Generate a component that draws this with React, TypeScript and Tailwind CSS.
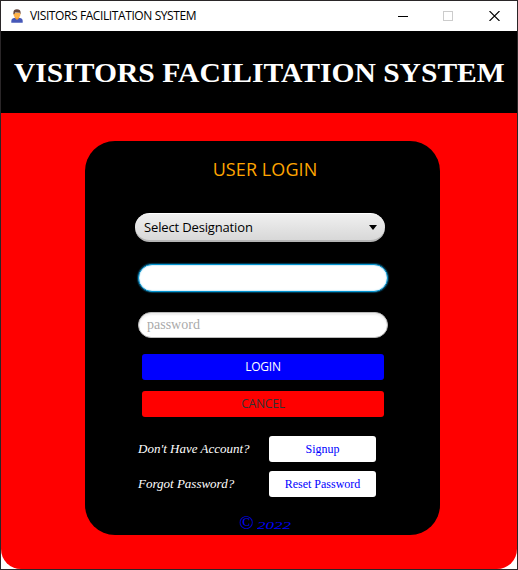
import type { ReactNode } from "react";

const sans = "font-['Open_Sans','Noto_Sans',sans-serif]";
const serif = "font-['Liberation_Serif',serif]";

function UserIcon() {
  return (
    <svg width="12" height="14" viewBox="0 0 12 14" aria-hidden="true">
      <path d="M.3 13.8V12Q.3 9.2 3.8 8.7h4.6q3.3.5 3.3 3.3v1.8Z" fill="#4658b8" />
      <path d="M4 8h4v1.3L6 11 4 9.3Z" fill="#f29a2e" />
      <path d="M2.6 4h6.8v1.8Q8.8 9 6 9T2.6 5.8Z" fill="#ffb34a" />
      <path d="M2.4 5.2V3.3Q2.500.2 5.9.2q3.6 0 3.7 3.1v1.900l-.9-1.500-4.500-.3-.9 1.900Z" fill="#68483f" />
    </svg>
  );
}

function TitleBar() {
  return (
    <div className="flex h-[30px] shrink-0 items-center bg-white pl-[10px]">
      <UserIcon />
      <span className={`${sans} ml-[7px] w-[170px] text-[12px] leading-[16px] tracking-[-0.4px] whitespace-nowrap text-black`}>
        VISITORS FACILITATION SYSTEM
      </span>
      <div className="ml-auto flex h-[10px] items-center gap-[35px] pr-[17px]">
        <span className="h-px w-[10px] bg-black" />
        <span className="h-[10px] w-[10px] border border-[#ccc]" />
        <svg width="11" height="10" viewBox="0 0 11 10" className="mb-px ml-px" aria-hidden="true">
          <path d="M.5 0l10 10M10.500 0l-10 10" stroke="#000" strokeWidth="1.1" />
        </svg>
      </div>
    </div>
  );
}

function SmallButton({ children }: { children: ReactNode }) {
  return (
    <button className={`${serif} h-[26px] w-[107px] rounded-[3px] bg-white text-[12px] leading-[26px] text-[#00f]`}>
      {children}
    </button>
  );
}

export default function App() {
  return (
    <div className="flex h-[570px] w-[518px] flex-col border border-[#2a2628] bg-white">
      <TitleBar />
      <header className="flex h-[82px] shrink-0 items-center justify-center bg-black pt-[2px]">
        <h1 className={`${serif} scale-x-[1.056] text-[28px] leading-[32px] font-bold whitespace-nowrap text-white`}>
          VISITORS FACILITATION SYSTEM
        </h1>
      </header>
      <main className="flex-1 rounded-b-[20px] bg-[#f00] pt-[28px] pl-[84px]">
        <section className="flex h-[394px] w-[355px] flex-col rounded-[30px] bg-black pt-[16px]">
          <h2 className={`${sans} h-[24px] pl-[5px] text-center text-[18px] leading-[25px] tracking-[0.08px] text-[#ffa500]`}>
            USER LOGIN
          </h2>
          <button className="mt-[32px] ml-[50px] flex h-[29px] w-[250px] items-center justify-between rounded-full border-t border-b-2 border-t-white border-b-[#b5b5b5] bg-linear-to-b from-[#f0f0f0] to-[#d8d8d8] pr-[8px] pl-[9px]">
            <span className={`${sans} text-[13px] leading-[18px] tracking-[-0.15px] text-black`}>Select Designation</span>
            <svg width="8" height="5" viewBox="0 0 8 5" aria-hidden="true">
              <path d="M0 0h8L4 5Z" fill="#000" />
            </svg>
          </button>
          <input
            aria-label="username"
            className="mt-[22px] ml-[53px] h-[28px] w-[250px] rounded-full border border-[#0394d0] bg-white shadow-[0_0_1px_1px_#033c55,inset_0_0_1px_1px_#d5effa] outline-none"
          />
          <input
            aria-label="password"
            placeholder="password"
            className={`${serif} mt-[20px] ml-[53px] h-[26px] w-[250px] rounded-full border border-[#bababa] bg-white pl-[8px] text-[14px] shadow-[inset_0_2px_2px_#eee] outline-none placeholder:text-[#aaa]`}
          />
          <div className={`${sans} mt-[16px] ml-[57px] flex w-[242px] flex-col gap-[11px] text-[12px] leading-[26px]`}>
            <button className="h-[26px] rounded-[3px] bg-[#00f] tracking-[-0.2px] text-white">LOGIN</button>
            <button className="h-[26px] rounded-[3px] bg-[#f00] tracking-[-0.2px] text-[#333]">CANCEL</button>
          </div>
          <div className={`${serif} mt-[19px] ml-[53px] grid grid-cols-[131px_107px] gap-y-[9px] text-[13px] leading-[26px] text-white italic`}>
            <span>Don&apos;t Have Account?</span>
            <div className="flex not-italic"><SmallButton>Signup</SmallButton></div>
            <span>Forgot Password?</span>
            <div className="flex not-italic"><SmallButton>Reset Password</SmallButton></div>
          </div>
          <footer className={`${serif} mt-[15px] ml-[154px] flex h-[22px] items-baseline gap-[4px] text-[#00f] italic`}>
            <span className="text-[19px] leading-[22px]">©</span>
            <span className="inline-block origin-left scale-x-[1.55] text-[11px]">2022</span>
          </footer>
        </section>
      </main>
    </div>
  );
}
